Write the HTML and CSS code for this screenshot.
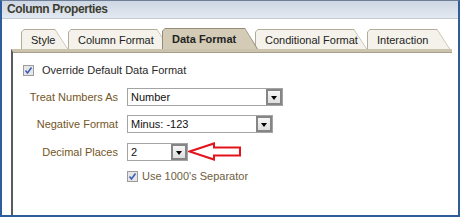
FILE: index.html
```html
<!DOCTYPE html>
<html>
  <head>
    <meta charset="utf-8" />
    <title>Column Properties</title>
    <link rel="stylesheet" href="styles.css">
  </head>

  <body>
    <div class="dialog">
      <div class="titlebar">Column Properties</div>

      <!-- 탭 -->
      <ul class="tabs">
        <li class="tab t1"><span>Style</span></li>
        <li class="tab t2"><span>Column Format</span></li>
        <li class="tab t3 on"><span>Data Format</span></li>
        <li class="tab t4"><span>Conditional Format</span></li>
        <li class="tab t5"><span>Interaction</span></li>
      </ul>

      <div class="panel">
        <label class="check top">
          <svg class="box" width="11" height="11" viewBox="0 0 11 11">
            <rect x="0.5" y="0.5" width="10" height="10" fill="#e6e6e6" stroke="#9c9c9c"/>
            <path d="M2.5 5.5 L4.5 8 L8.5 2.5" fill="none" stroke="#3b5fb8" stroke-width="1.6"/>
          </svg>
          Override Default Data Format
        </label>

        <div class="form">
          <span class="lbl">Treat Numbers As</span>
          <div class="sel w1">Number<i class="btn"></i></div>

          <span class="lbl">Negative Format</span>
          <div class="sel w2">Minus: -123<i class="btn"></i></div>

          <span class="lbl">Decimal Places</span>
          <div class="row">
            <div class="sel w3">2<i class="btn"></i></div>
            <svg class="arrow" width="54" height="19" viewBox="0 0 54 19">
              <polygon points="1.5,9.5 26,1.5 26,5.5 52,5.5 52,13.5 26,13.5 26,17.5" fill="#fff" stroke="#e3141b" stroke-width="2"/>
            </svg>
          </div>

          <span></span>
          <label class="check sub">
            <svg class="box" width="11" height="11" viewBox="0 0 11 11">
              <rect x="0.5" y="0.5" width="10" height="10" fill="#e6e6e6" stroke="#9c9c9c"/>
              <path d="M2.5 5.5 L4.5 8 L8.5 2.5" fill="none" stroke="#3b5fb8" stroke-width="1.6"/>
            </svg>
            Use 1000's Separator
          </label>
        </div>
      </div>
    </div>
  </body>
</html>
```

FILE: styles.css
```css
body {
  margin: 0;
  font-family: "Liberation Sans", Arial, sans-serif;
  font-size: 11px;
}

/* 바깥 창 */
.dialog {
  width: 460px;
  height: 217px;
  box-sizing: border-box;
  border: 2px solid #2f5d9c;
  border-top: 1px solid #6f7f95;
  background: #fff;
  overflow: hidden;
}

.titlebar {
  height: 17px;
  padding-left: 5px;
  line-height: 17px;
  font-size: 12px;
  font-weight: bold;
  letter-spacing: -0.4px;
  color: #3d3d30;
  background: linear-gradient(to bottom, #cdd6e3, #e3e9f1);
  border-bottom: 1px solid #c3cbd6;
}

/* 탭 */
.tabs {
  display: flex;
  margin: 10px 0 0;
  padding: 0 0 0 19px;
  list-style: none;
  height: 20px;
}

.tab {
  position: relative;
  height: 20px;
  background: #b3ac9a;
  clip-path: polygon(0 3px, 3px 0, calc(100% - 13px) 0, 100% 100%, 0 100%);
}

.tab span {
  display: block;
  height: 19px;
  margin: 1px 0 0 1px;
  padding-left: 9px;
  line-height: 20px;
  color: #222;
  background: #f4f2ea;
  clip-path: polygon(0 2px, 2px 0, calc(100% - 13px) 0, calc(100% - 0.5px) 100%, 0 100%);
}

.t1 { width: 47px; }
.t2 { width: 102px; margin-right: -8px; }
.t3 { width: 96px; margin-right: -3px; z-index: 2; }
.t4 { width: 112px; }
.t5 { width: 83px; }

.tab.on {
  height: 21px;
  margin-top: -1px;
  background: #948c77;
}

.tab.on span {
  height: 21px;
  font-weight: bold;
  background: #d3cbb6;
}

/* 내용 영역 */
.panel {
  width: 441px;
  height: 170px;
  margin-left: 9px;
  box-sizing: border-box;
  border-left: 2px solid #5b5b5b;
  border-top: 3px solid #cbc3ad;
  box-shadow: inset 0 1px 0 #a79f8a;
  padding: 12px 0 0 10px;
}

.check {
  display: flex;
  align-items: center;
  gap: 8px;
  color: #2a2a2a;
}

.check.sub {
  gap: 4px;
  color: #6e5e40;
}

.box {
  flex: none;
}

.form {
  display: grid;
  grid-template-columns: 95px auto;
  column-gap: 9px;
  row-gap: 9px;
  align-items: center;
  margin-top: 12px;
}

.lbl {
  text-align: right;
  color: #745626;
}

.row {
  display: flex;
  align-items: center;
}

/* 셀렉트 박스 */
.sel {
  position: relative;
  height: 18px;
  box-sizing: border-box;
  border: 1px solid #a4a4a4;
  padding-left: 3px;
  line-height: 16px;
  color: #111;
}

.w1 { width: 156px; }
.w2 { width: 146px; }
.w3 { width: 61px; }

.btn {
  position: absolute;
  right: 0;
  top: 0;
  width: 16px;
  height: 16px;
  box-sizing: border-box;
  border: 2px solid #858585;
  background: linear-gradient(#f6f6f6, #dedede);
}

.btn::after {
  content: "";
  position: absolute;
  left: 3px;
  top: 5px;
  border-left: 3.5px solid transparent;
  border-right: 3.5px solid transparent;
  border-top: 4px solid #000;
}

.arrow {
  display: block;
}
```
